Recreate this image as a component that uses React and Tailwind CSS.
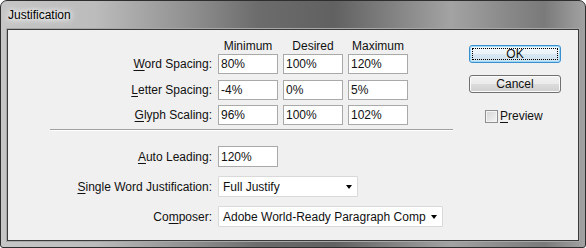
import React from 'react';

const U = ({ children }) => <span className="underline underline-offset-[2px]">{children}</span>;

const Field = ({ value, className = '' }) => (
  <div className={`h-[20px] w-[60px] border border-[#a9a9a9] bg-white pl-[2px] flex items-center ${className}`}>
    {value}
  </div>
);

const Dropdown = ({ value, width }) => (
  <div className={`ml-[6px] h-[21px] ${width} border border-[#d9d9d9] bg-white rounded-[1px] flex items-center pl-[4px] pr-[5px]`}>
    <span className="flex-1 whitespace-nowrap overflow-hidden">{value}</span>
    <span className="w-0 h-0 border-l-[3.5px] border-r-[3.5px] border-t-[4px] border-l-transparent border-r-transparent border-t-black" />
  </div>
);

const rows = [
  { label: <><U>W</U>ord Spacing:</>, vals: ['80%', '100%', '120%'], mt: 'mt-[1px]' },
  { label: <><U>L</U>etter Spacing:</>, vals: ['-4%', '0%', '5%'], mt: 'mt-[6px]' },
  { label: <><U>G</U>lyph Scaling:</>, vals: ['96%', '100%', '102%'], mt: 'mt-[5px]' },
];

export default function App() {
  return (
    <div className="w-[586px] h-[248px] flex flex-col border border-[#2e2e2e] rounded-t-[7px] rounded-b-[3px] overflow-hidden font-['Liberation_Sans',Arial,sans-serif] text-[12px] text-[#111] bg-[linear-gradient(90deg,#c6c6c6_0%,#bcbcbc_16%,#8e8e8e_33%,#6c6c6c_44%,#616161_57%,#858585_68%,#a3a3a3_77%,#888888_87%,#7a7a7a_93%,#a2a2a2_100%)]">
      <div className="h-[28px] pl-[7px] flex items-center">
        <span className="text-black [text-shadow:0_0_8px_#ffffff,0_0_8px_#ffffff,0_0_4px_#ffffff]">Justification</span>
      </div>
      <div className="mx-[6px] h-[212px] border border-[#3a3a3a] bg-[#f0f0f0] shadow-[0_0_0_1px_#a8a8a8] flex">
        <div className="w-[461px] flex flex-col">
          <div className="flex h-[14px] mt-[9px] leading-[14px]">
            <div className="w-[210px]" />
            <div className="w-[60px] text-center">Minimum</div>
            <div className="w-[60px] ml-[5px] text-center">Desired</div>
            <div className="w-[60px] ml-[5px] text-center">Maximum</div>
          </div>
          {rows.map((r, i) => (
            <div key={i} className={`flex items-center h-[20px] ${r.mt}`}>
              <div className="w-[204px] text-right whitespace-nowrap">{r.label}</div>
              <Field value={r.vals[0]} className="ml-[6px]" />
              <Field value={r.vals[1]} className="ml-[5px]" />
              <Field value={r.vals[2]} className="ml-[5px]" />
            </div>
          ))}
          <div className="mt-[4px] ml-[42px] w-[403px] h-[2px] border-t border-t-[#a0a0a0] border-b border-b-white" />
          <div className="flex items-center h-[21px] mt-[15px]">
            <div className="w-[204px] text-right whitespace-nowrap"><U>A</U>uto Leading:</div>
            <div className="ml-[6px] h-[21px] w-[60px] border border-[#a9a9a9] bg-white pl-[2px] flex items-center">120%</div>
          </div>
          <div className="flex items-center h-[21px] mt-[9px]">
            <div className="w-[204px] text-right whitespace-nowrap"><U>S</U>ingle Word Justification:</div>
            <Dropdown value="Full Justify" width="w-[140px]" />
          </div>
          <div className="flex items-center h-[21px] mt-[9px]">
            <div className="w-[204px] text-right whitespace-nowrap">Co<U>m</U>poser:</div>
            <Dropdown value="Adobe World-Ready Paragraph Comp" width="w-[225px]" />
          </div>
        </div>
        <div className="w-[92px] flex flex-col pt-[15px]">
          <button className="relative h-[18px] w-[92px] rounded-[3px] border border-[#3c8fcf] shadow-[inset_0_0_0_1px_#9fdcf8] bg-[linear-gradient(#f4f9fc,#eaf3f9_50%,#d7e8f3_50%,#cfe2ef)] flex items-center justify-center leading-none">
            <span className="absolute inset-[2px] border border-dotted border-black" />
            OK
          </button>
          <button className="mt-[12px] h-[18px] w-[92px] rounded-[3px] border border-[#707070] shadow-[inset_0_0_0_1px_#fbfbfb] bg-[linear-gradient(#f2f2f2,#ebebeb_50%,#dddddd_50%,#cfcfcf)] flex items-center justify-center leading-none">
            Cancel
          </button>
          <div className="mt-[14px] ml-[16px] flex items-center">
            <span className="w-[13px] h-[13px] border border-[#8e8f8f] bg-[linear-gradient(135deg,#d4d4d4,#f6f6f6)] shadow-[inset_0_0_0_1px_#f4f4f4]" />
            <span className="ml-[2px]"><U>P</U>review</span>
          </div>
        </div>
      </div>
    </div>
  );
}
